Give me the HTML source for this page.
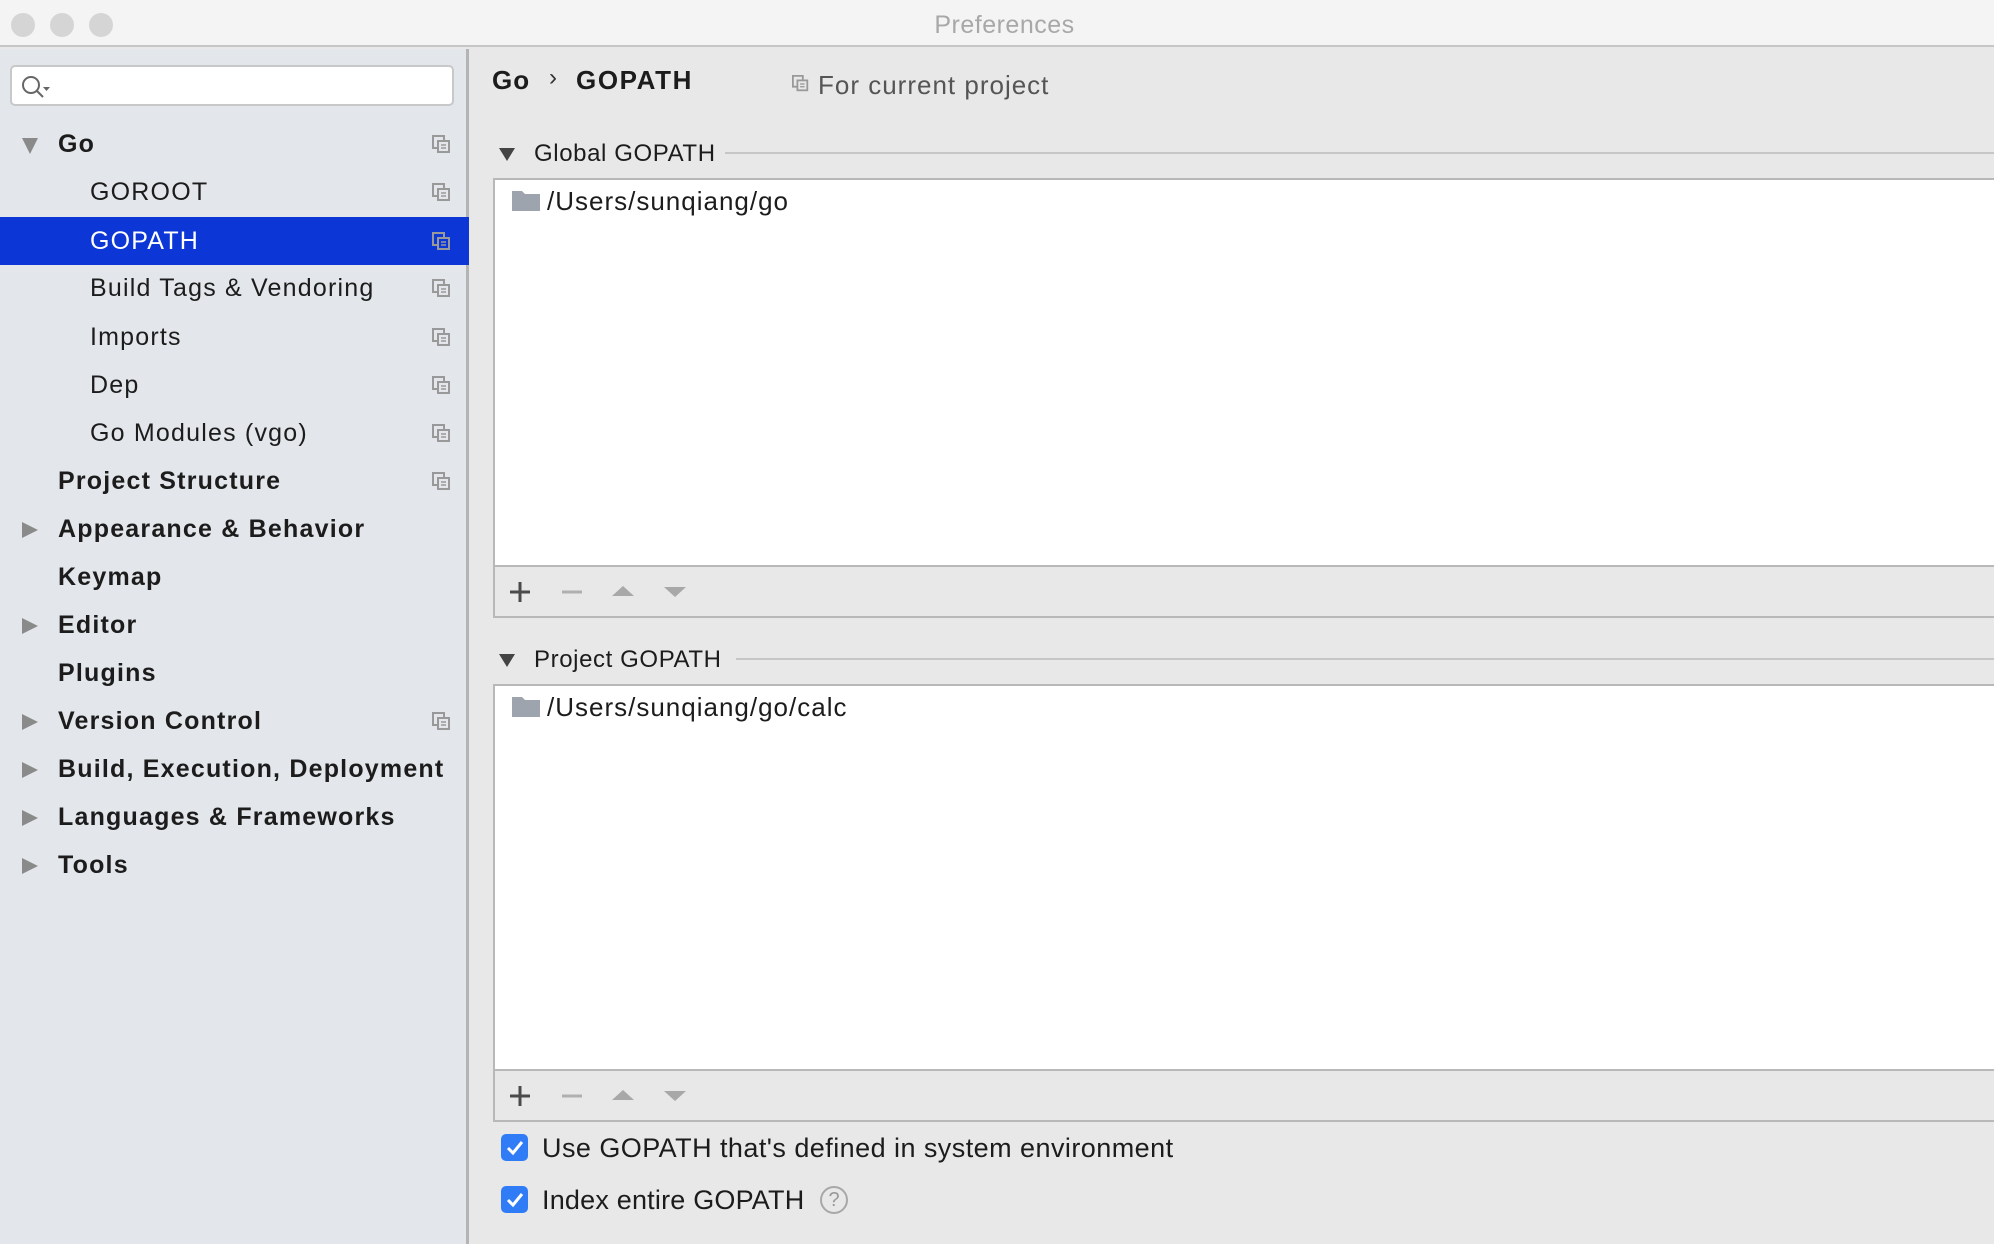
<!DOCTYPE html>
<html><head><meta charset="utf-8"><style>
*{margin:0;padding:0;box-sizing:border-box}
body{width:1994px;height:1244px;overflow:hidden;background:#e8e8e8;font-family:"Liberation Sans",sans-serif;position:relative;color:#1c1c1c}
.abs{position:absolute}
#title{left:0;top:0;width:1994px;height:47px;background:#f4f4f4;border-bottom:2px solid #c6c6c6}
#title .t{left:0;width:1994px;top:11px;text-align:center;font-size:25px;color:#a8a8a8;padding-left:15px;letter-spacing:.5px}
.dot{width:24px;height:24px;border-radius:50%;background:#d5d5d5;top:13px}
#side{left:0;top:49px;width:469px;height:1195px;background:#e3e6ea;border-right:3px solid #b4b4b4}
#search{left:10px;top:65px;width:444px;height:41px;background:#fff;border:2px solid #c8c8c8;border-radius:5px}
.row{position:absolute;left:0;width:469px;height:48px;font-size:25px;line-height:48px;letter-spacing:1.2px}
.row.b{font-weight:bold;letter-spacing:1.2px}
.row.sel{background:#0c36d6;color:#fff}
.arr{position:absolute;left:22px;top:17px;width:0;height:0;border-left:16px solid #8a8a8a;border-top:8px solid transparent;border-bottom:8px solid transparent}
.arrd{position:absolute;left:22px;top:18px;width:0;height:0;border-top:16px solid #8a8a8a;border-left:8px solid transparent;border-right:8px solid transparent}
.cp{position:absolute;left:432px;top:15px;width:18px;height:18px}
.box{left:493px;width:1501px;background:#fff;border:2px solid #b8b8b8;border-right:none}
.tb{left:493px;width:1501px;background:#e8e8e8;border:2px solid #b8b8b8;border-top:none;border-right:none;height:51px}
.hdr{font-size:24px;color:#1c1c1c;letter-spacing:.6px}
.line{height:2px;background:#c6c6c6}
.chk{width:27px;height:27px;border-radius:5px;background:#2f7cf6}
</style></head><body>
<div id="title" class="abs"><div class="t abs">Preferences</div>
<div class="dot abs" style="left:11px"></div><div class="dot abs" style="left:50px"></div><div class="dot abs" style="left:89px"></div></div>
<div id="side" class="abs"></div>
<div id="search" class="abs"><svg width="40" height="36" style="position:absolute;left:6px;top:2px"><circle cx="13" cy="16" r="8" fill="none" stroke="#666" stroke-width="2"/><line x1="19" y1="22" x2="25" y2="28" stroke="#666" stroke-width="2"/><path d="M25 18h7l-3.5 4z" fill="#666"/></svg></div>
<svg width="0" height="0" style="position:absolute"><defs><g id="ci"><path d="M12 5V1H1v12h5" fill="none" stroke="#999" stroke-width="2"/><rect x="6" y="6" width="11" height="11" fill="none" stroke="#999" stroke-width="2"/><line x1="9" y1="10" x2="14" y2="10" stroke="#999" stroke-width="1.5"/><line x1="9" y1="13" x2="14" y2="13" stroke="#999" stroke-width="1.5"/></g></defs></svg>

<div class="row b" style="top:120px"><span class="arrd"></span><span style="position:absolute;left:58px">Go</span><svg class="cp"><use href="#ci"/></svg></div>
<div class="row" style="top:168px"><span style="position:absolute;left:90px">GOROOT</span><svg class="cp"><use href="#ci"/></svg></div>
<div class="row sel" style="top:217px"><span style="position:absolute;left:90px">GOPATH</span><svg class="cp"><use href="#ci"/></svg></div>
<div class="row" style="top:264px"><span style="position:absolute;left:90px">Build Tags &amp; Vendoring</span><svg class="cp"><use href="#ci"/></svg></div>
<div class="row" style="top:313px"><span style="position:absolute;left:90px">Imports</span><svg class="cp"><use href="#ci"/></svg></div>
<div class="row" style="top:361px"><span style="position:absolute;left:90px">Dep</span><svg class="cp"><use href="#ci"/></svg></div>
<div class="row" style="top:409px"><span style="position:absolute;left:90px">Go Modules (vgo)</span><svg class="cp"><use href="#ci"/></svg></div>
<div class="row b" style="top:457px"><span style="position:absolute;left:58px">Project Structure</span><svg class="cp"><use href="#ci"/></svg></div>
<div class="row b" style="top:505px"><span class="arr"></span><span style="position:absolute;left:58px">Appearance &amp; Behavior</span></div>
<div class="row b" style="top:553px"><span style="position:absolute;left:58px">Keymap</span></div>
<div class="row b" style="top:601px"><span class="arr"></span><span style="position:absolute;left:58px">Editor</span></div>
<div class="row b" style="top:649px"><span style="position:absolute;left:58px">Plugins</span></div>
<div class="row b" style="top:697px"><span class="arr"></span><span style="position:absolute;left:58px">Version Control</span><svg class="cp"><use href="#ci"/></svg></div>
<div class="row b" style="top:745px"><span class="arr"></span><span style="position:absolute;left:58px">Build, Execution, Deployment</span></div>
<div class="row b" style="top:793px"><span class="arr"></span><span style="position:absolute;left:58px">Languages &amp; Frameworks</span></div>
<div class="row b" style="top:841px"><span class="arr"></span><span style="position:absolute;left:58px">Tools</span></div>

<div class="abs" style="left:492px;top:65px;font-size:26px;font-weight:bold;letter-spacing:1px">Go</div>
<div class="abs" style="left:549px;top:64px;font-size:24px;color:#333">›</div>
<div class="abs" style="left:576px;top:65px;font-size:26px;font-weight:bold;letter-spacing:1.6px">GOPATH</div>
<svg class="abs" style="left:792px;top:75px" width="18" height="18"><g transform="scale(.9)"><use href="#ci"/></g></svg>
<div class="abs" style="left:818px;top:70px;font-size:26px;color:#555;letter-spacing:1px">For current project</div>

<div class="abs" style="left:499px;top:148px;border-top:13px solid #444;border-left:8px solid transparent;border-right:8px solid transparent"></div>
<div class="abs hdr" style="left:534px;top:140px">Global GOPATH</div>
<div class="abs line" style="left:725px;top:152px;width:1269px"></div>
<div class="abs box" style="top:178px;height:389px"></div>
<svg class="abs" style="left:512px;top:189px" width="28" height="22"><path d="M0 2h10l3 3h15v17H0z" fill="#9ea4ad"/></svg>
<div class="abs" style="left:547px;top:186px;font-size:26px;letter-spacing:1px">/Users/sunqiang/go</div>
<div class="abs tb" style="top:567px"></div>

<div class="abs" style="left:499px;top:654px;border-top:13px solid #444;border-left:8px solid transparent;border-right:8px solid transparent"></div>
<div class="abs hdr" style="left:534px;top:646px">Project GOPATH</div>
<div class="abs line" style="left:736px;top:658px;width:1258px"></div>
<div class="abs box" style="top:684px;height:387px"></div>
<svg class="abs" style="left:512px;top:695px" width="28" height="22"><path d="M0 2h10l3 3h15v17H0z" fill="#9ea4ad"/></svg>
<div class="abs" style="left:547px;top:692px;font-size:26px;letter-spacing:1px">/Users/sunqiang/go/calc</div>
<div class="abs tb" style="top:1071px"></div>

<svg class="abs" style="left:505px;top:580px" width="200" height="24"><path d="M15 2v20M5 12h20" stroke="#4a4a4a" stroke-width="3"/><path d="M57 12h20" stroke="#b0b0b0" stroke-width="3"/><path d="M107 16l11-10 11 10z" fill="#a8a8a8"/><path d="M159 7h22l-11 10z" fill="#a8a8a8"/></svg>
<svg class="abs" style="left:505px;top:1084px" width="200" height="24"><path d="M15 2v20M5 12h20" stroke="#4a4a4a" stroke-width="3"/><path d="M57 12h20" stroke="#b0b0b0" stroke-width="3"/><path d="M107 16l11-10 11 10z" fill="#a8a8a8"/><path d="M159 7h22l-11 10z" fill="#a8a8a8"/></svg>

<div class="abs chk" style="left:501px;top:1134px"><svg width="27" height="27"><path d="M7 14l5 5 9-11" fill="none" stroke="#fff" stroke-width="3"/></svg></div>
<div class="abs" style="left:542px;top:1133px;font-size:27px;letter-spacing:.45px">Use GOPATH that's defined in system environment</div>
<div class="abs chk" style="left:501px;top:1186px"><svg width="27" height="27"><path d="M7 14l5 5 9-11" fill="none" stroke="#fff" stroke-width="3"/></svg></div>
<div class="abs" style="left:542px;top:1185px;font-size:27px;letter-spacing:.2px">Index entire GOPATH</div>
<div class="abs" style="left:820px;top:1186px;width:28px;height:28px;border:2px solid #a8a8a8;border-radius:50%;color:#999;font-size:20px;text-align:center;line-height:24px">?</div>
</body></html>
